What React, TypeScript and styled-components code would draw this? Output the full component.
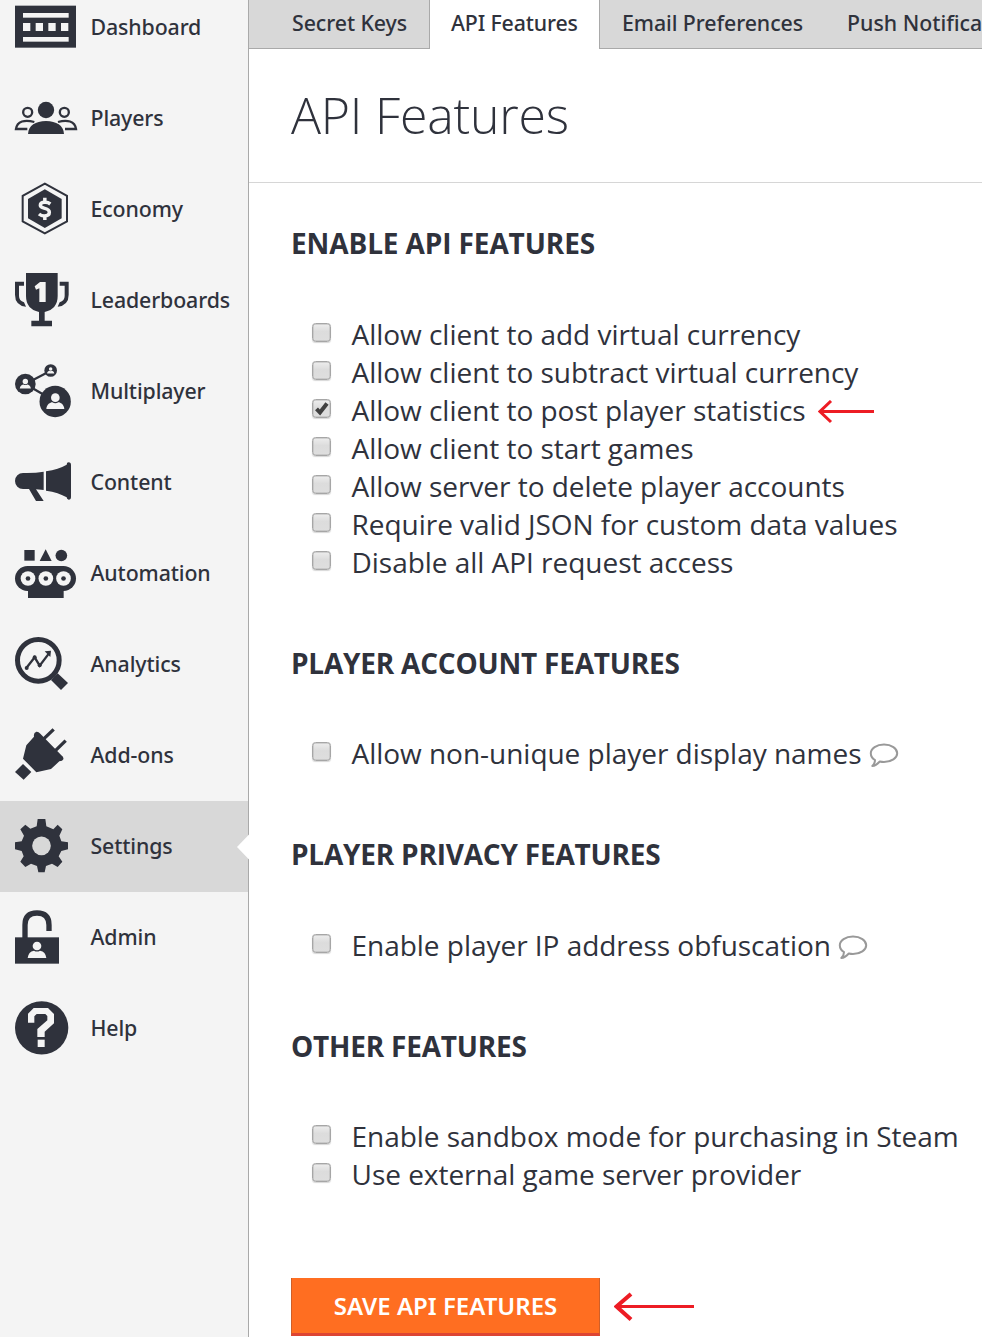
import React from "react";
import styled, { createGlobalStyle } from "styled-components";

const INK = "#2f323c";

const GlobalStyle = createGlobalStyle`
  * { box-sizing: border-box; }
  html, body { margin: 0; padding: 0; background: #fff; overflow: hidden; }
  body { font-family: "Open Sans", "Noto Sans", sans-serif; color: ${INK}; }
`;

const Page = styled.div`
  display: flex;
  width: 982px;
  height: 1337px;
  overflow: hidden;
`;

const Sidebar = styled.nav`
  flex: 0 0 249px;
  background: #f4f4f4;
  border-right: 1px solid #a9a9a9;
`;

const NavList = styled.ul`
  list-style: none;
  margin: -18px 0 0;
  padding: 0;
`;

const NavItem = styled.li<{ $active?: boolean }>`
  position: relative;
  display: flex;
  align-items: center;
  height: 91px;
  width: 248px;
  background: ${(p) => (p.$active ? "#d8d8d8" : "transparent")};
`;

const NavIcon = styled.svg`
  flex: 0 0 80px;
  width: 80px;
  height: 91px;
  display: block;
`;

const NavLabel = styled.span`
  margin: -2px 0 0 10.5px;
  font: 500 21.33px/30px "Noto Sans", sans-serif;
  letter-spacing: -0.12px;
  white-space: nowrap;
`;

const Notch = styled.svg`
  position: absolute;
  right: -1px;
  top: 33px;
  width: 12px;
  height: 26px;
`;

const Main = styled.main`
  flex: 0 0 733px;
  overflow: hidden;
`;

const Tabs = styled.div`
  display: flex;
  height: 49px;
  background: #d8d8d8;
  box-shadow: inset 0 -1px 0 #a9a9a9;
  overflow: hidden;
`;

const Tab = styled.div<{ $active?: boolean; $width: number; $pad: number; $spacing?: number }>`
  flex: 0 0 ${(p) => p.$width}px;
  height: 49px;
  padding-left: ${(p) => p.$pad}px;
  font: 500 21.33px/46px "Noto Sans", sans-serif;
  letter-spacing: ${(p) => p.$spacing ?? -0.08}px;
  white-space: nowrap;
  ${(p) =>
    p.$active &&
    `background: #fff; border-left: 1px solid #a9a9a9; border-right: 1px solid #a9a9a9;`}
`;

const Header = styled.header`
  height: 134px;
  padding: 32px 0 0 42px;
  border-bottom: 1px solid #d6d6d6;
`;

const Title = styled.h1`
  margin: 0;
  font-size: 50px;
  line-height: 68px;
  font-weight: 300;
  letter-spacing: -0.22px;
  white-space: nowrap;
`;

const Body = styled.div`
  padding: 41px 0 0 42px;
`;

const SectionTitle = styled.h2`
  margin: 0 0 53px;
  font-size: 28px;
  line-height: 38px;
  font-weight: 700;
  letter-spacing: -0.22px;
  white-space: nowrap;
`;

const Section = styled.section`
  margin-bottom: 63px;
  &:nth-of-type(even) ${SectionTitle} { margin-bottom: 52px; }
  &:first-of-type ${SectionTitle} { letter-spacing: -0.11px; }
  &:last-of-type { margin-bottom: 85px; }
`;

const Option = styled.label`
  display: flex;
  align-items: center;
  height: 38px;
  padding-left: 21px;
  white-space: nowrap;
`;

const Box = styled.span`
  display: flex;
  flex: 0 0 19px;
  height: 19px;
  margin: -3px 20.5px 0 0;
  border: 1px solid #a6a6a6;
  border-radius: 3.5px;
  background: linear-gradient(#ededed, #dcdcdc 45%, #dedede);
  box-shadow: 0 1px 1px rgba(0, 0, 0, 0.16), inset 0 0 0 0.5px #b4b4b4;
`;

const OptionText = styled.span`
  font-size: 28px;
  line-height: 38px;
  letter-spacing: -0.03px;
`;

const Inline = styled.svg<{ $gap: number; $drop?: number }>`
  flex: none;
  display: block;
  margin-left: ${(p) => p.$gap}px;
  margin-top: ${(p) => p.$drop ?? 0}px;
`;

const Actions = styled.div`
  display: flex;
  align-items: center;
`;

const SaveButton = styled.button`
  width: 309px;
  height: 58px;
  padding: 0;
  border: 1px solid #cf5f28;
  border-top: 0;
  border-bottom: 3px solid #dd4433;
  background: #ff6e21;
  color: #fff;
  font: 600 24px/54px "Noto Sans", sans-serif;
  white-space: nowrap;
`;

type IconDef = { top: number; art: React.ReactNode };

const L = "#f4f4f4";

const Person = ({ x, y, s }: { x: number; y: number; s: number }) => (
  <g transform={`translate(${x} ${y}) scale(${s})`} fill={L}>
    <circle cx="0" cy="-12" r="13" />
    <path d="M-27 22C-26 8-15 2-9 2Q0 8 9 2C15 2 26 8 27 22Z" />
  </g>
);

const icons: Record<string, IconDef> = {
  Dashboard: {
    top: -54,
    art: (
      <>
        <rect x="45" y="17" width="183" height="126" />
        <g fill={L}>
          <rect x="69" y="39" width="137" height="14" />
          <rect x="69" y="111" width="137" height="14" />
          <rect x="69" y="69" width="22" height="24" />
          <rect x="107" y="69" width="22" height="24" />
          <rect x="145" y="69" width="22" height="24" />
          <rect x="183" y="69" width="22" height="24" />
        </g>
      </>
    ),
  },
  Players: {
    top: 219,
    art: (
      <>
        <circle cx="138" cy="330" r="24.5" />
        <path d="M84 402C86 375 106 364 138 363C170 364 190 375 192 402Z" />
        <g fill="none" stroke={INK} strokeWidth="7">
          <circle cx="83" cy="337" r="13.500" />
          <circle cx="193" cy="337" r="13.500" />
          <path d="M103 366C75 358 51 363 48 387H82" />
          <path d="M174 366C201 358 225 363 228 387H195" />
        </g>
      </>
    ),
  },
  Economy: {
    top: -18,
    art: (
      <>
        <path d="M134.500 41L201 77.500V154L134.500 190L68 154V77.500Z" fill="none" stroke={INK} strokeWidth="6" />
        <path d="M134.500 58L185 87V145L134.500 174L84 145V87Z" />
        <path
          d="M151 102Q143 96 134 97Q121 97 121 106Q121 112 132 114.500Q148 118 148 127Q148 138 133 138Q124 138 117 132M134.500 83V98M134.500 136V150"
          fill="none"
          stroke={L}
          strokeWidth="10.500"
        />
      </>
    ),
  },
  Leaderboards: {
    top: 255,
    art: (
      <>
        <path d="M78 309H173V378Q173 417 134 426V452H156V469H94V452H117V426Q78 417 78 378Z" />
        <path d="M45 335H72V347H57V378Q57 392 72 397L78 410Q45 406 45 374Z" />
        <path d="M206 335H179V347H194V378Q194 392 179 397L173 410Q206 406 206 374Z" />
        <path d="M120 336H137V396H118V355L108 359L104 349Z" fill={L} />
      </>
    ),
  },
  Multiplayer: {
    top: -12,
    art: (
      <>
        <path d="M152 62L76 102L165 154" fill="none" stroke={INK} strokeWidth="7" />
        <circle cx="76" cy="102" r="31" />
        <circle cx="152" cy="61.500" r="19" />
        <circle cx="165.500" cy="154.500" r="47" />
        <Person x={76} y={102} s={0.62} />
        <Person x={152} y={61.5} s={0.4} />
        <Person x={166} y={155} s={1} />
      </>
    ),
  },
  Content: {
    top: 261,
    art: (
      <>
        <path d="M131 365V420L108 418L131 453H108L87 417H69A24 24 0 0 1 69 369Q105 370 131 365Z" />
        <path d="M138 364Q176 358 200 344Q200 337 206 337Q213 337 213 345V441Q213 449 206 449Q200 448 200 442Q176 427 138 422Z" />
      </>
    ),
  },
  Automation: {
    top: -6,
    art: (
      <>
        <rect x="73" y="60" width="31" height="32" />
        <path d="M137 58L155 93H119Z" />
        <circle cx="184" cy="76.500" r="17.500" />
        <rect x="45" y="108" width="183" height="75" rx="37.500" />
        <rect x="84" y="170" width="107" height="34" />
        {[84, 137.5, 190.5].map((x) => (
          <g key={x}>
            <circle cx={x} cy="145.500" r="22" fill={L} />
            <circle cx={x} cy="145.500" r="7" />
          </g>
        ))}
      </>
    ),
  },
  Analytics: {
    top: 267,
    art: (
      <>
        <circle cx="115" cy="391" r="62.500" fill="none" stroke={INK} strokeWidth="15" />
        <path d="M153 450L173 430L204 459L183 480Z" />
        <path d="M79 414L104 382L119 407L147 370" fill="none" stroke={INK} strokeWidth="7" />
        <circle cx="80" cy="414" r="6" />
        <circle cx="104" cy="382" r="6" />
        <circle cx="119" cy="406" r="6" />
        <path d="M134 364L153 362L151 381Z" />
      </>
    ),
  },
  "Add-ons": {
    top: -15,
    art: (
      <>
        <path d="M45 171L69 147L94 171L71 194Z" />
        <path d="M69 131L79 91L102 65Q100 52 109 50Q115 49 121 56L184 121Q192 126 190 133Q188 139 178 139L153 162L109 172Z" />
        <path d="M132 71L161 43M167 106L197 77" fill="none" stroke={INK} strokeWidth="10" />
      </>
    ),
  },
  Settings: {
    top: 258,
    art: (
      <>
        <path d="M113 312H136L139 334L160 343L173 329L187 343L178 362L184 379L204 382V403L184 408L176 424L187 440L173 456L156 446L138 453L134 472H115L111 453L93 446L76 456L61 440L71 424L65 408L45 403V382L65 379L72 362L61 343L76 329L91 341L110 334Z" />
        <circle cx="124.500" cy="392.500" r="28" fill="#d8d8d8" />
      </>
    ),
  },
  Admin: {
    top: -9,
    art: (
      <>
        <path d="M75 130V90Q75 54 111 54Q147 54 147 90V108" fill="none" stroke={INK} strokeWidth="16" />
        <rect x="45" y="127" width="132" height="79" />
        <circle cx="111" cy="153" r="13" fill={L} />
        <path d="M83 189Q85 170 102 167Q111 172 120 167Q137 170 139 189Z" fill={L} />
      </>
    ),
  },
  Help: {
    top: 264,
    art: (
      <>
        <circle cx="125" cy="398.500" r="80" />
        <path d="M84 383V356L101 339H144L162 357V385L134 410V426H112V402L142 376V363L136 357H110L103 364V383Z" fill={L} />
        <rect x="113" y="434" width="21" height="22" fill={L} />
      </>
    ),
  },
};

const Bubble = () => (
  <Inline $gap={7} $drop={4} width="30" height="26" viewBox="0 0 30 26">
    <path
      d="M15 2.500C22.500 2.500 28.200 6.500 28.200 11.200S22.500 20 15 20C13.500 20 12 19.800 10.800 19.500C8.500 22 6 23.800 3.300 24C5 22.500 6 20.500 6 18C3.300 16.400 1.800 13.800 1.800 11.200C1.800 6.500 7.500 2.500 15 2.500Z"
      fill="none"
      stroke="#999"
      strokeWidth="2"
      strokeLinejoin="round"
    />
  </Inline>
);

const Check = () => (
  <svg width="17" height="17" viewBox="0 0 17 17">
    <path d="M3.500 8.800L7 12.500L14 3.500" fill="none" stroke="#404040" strokeWidth="4" />
  </svg>
);

type Opt = { text: string; checked?: boolean; hint?: boolean };

const sections: { title: string; options: Opt[] }[] = [
  {
    title: "ENABLE API FEATURES",
    options: [
      { text: "Allow client to add virtual currency" },
      { text: "Allow client to subtract virtual currency" },
      { text: "Allow client to post player statistics", checked: true },
      { text: "Allow client to start games" },
      { text: "Allow server to delete player accounts" },
      { text: "Require valid JSON for custom data values" },
      { text: "Disable all API request access" },
    ],
  },
  { title: "PLAYER ACCOUNT FEATURES", options: [{ text: "Allow non-unique player display names", hint: true }] },
  { title: "PLAYER PRIVACY FEATURES", options: [{ text: "Enable player IP address obfuscation", hint: true }] },
  {
    title: "OTHER FEATURES",
    options: [{ text: "Enable sandbox mode for purchasing in Steam" }, { text: "Use external game server provider" }],
  },
];

export default function App() {
  return (
    <Page>
      <GlobalStyle />
      <Sidebar>
        <NavList>
          {Object.entries(icons).map(([name, icon]) => (
            <NavItem key={name} $active={name === "Settings"}>
              <NavIcon viewBox={`0 ${icon.top} 240 273`} fill={INK}>
                {icon.art}
              </NavIcon>
              <NavLabel>{name}</NavLabel>
              {name === "Settings" && (
                <Notch viewBox="0 0 12 26">
                  <path d="M12 0.500V25.500L0 13Z" fill="#fff" />
                </Notch>
              )}
            </NavItem>
          ))}
        </NavList>
      </Sidebar>
      <Main>
        <Tabs>
          <Tab $width={180} $pad={43}>Secret Keys</Tab>
          <Tab $width={171} $pad={21} $spacing={-0.15} $active>API Features</Tab>
          <Tab $width={225} $pad={22}>Email Preferences</Tab>
          <Tab $width={220} $pad={22} $spacing={0}>Push Notifications</Tab>
        </Tabs>
        <Header>
          <Title>API Features</Title>
        </Header>
        <Body>
          {sections.map((s) => (
            <Section key={s.title}>
              <SectionTitle>{s.title}</SectionTitle>
              {s.options.map((o) => (
                <Option key={o.text}>
                  <Box>{o.checked && <Check />}</Box>
                  <OptionText>{o.text}</OptionText>
                  {o.hint && <Bubble />}
                  {o.checked && (
                    <Inline $gap={12.5} $drop={4} width="57" height="24" viewBox="0 0 57 24">
                      <path d="M56 11.500H2M13 1L2 11.500L13 22" fill="none" stroke="#ed1c24" strokeWidth="3" />
                    </Inline>
                  )}
                </Option>
              ))}
            </Section>
          ))}
          <Actions>
            <SaveButton>SAVE API FEATURES</SaveButton>
            <Inline $gap={14} width="80" height="30" viewBox="0 0 80 30">
              <path d="M80 14.500H2" fill="none" stroke="#ed1c24" strokeWidth="3" />
              <path d="M17 2L2.500 14.500L17 27.500" fill="none" stroke="#ed1c24" strokeWidth="4.200" />
            </Inline>
          </Actions>
        </Body>
      </Main>
    </Page>
  );
}
